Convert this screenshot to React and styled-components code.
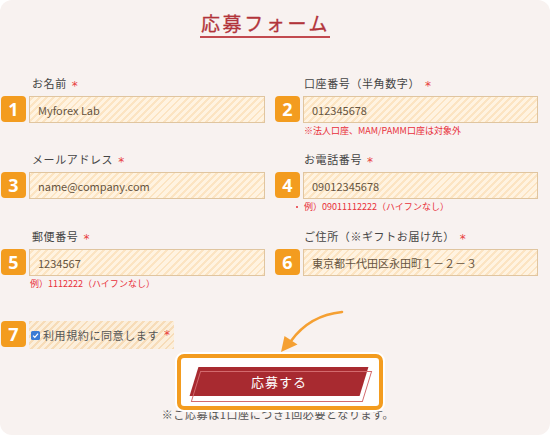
import React from "react";
import styled, { createGlobalStyle } from "styled-components";

const Global = createGlobalStyle`
  html, body { margin: 0; padding: 0; background: #ffffff; }
  body { font-family: "Noto Sans CJK JP", "Noto Sans", sans-serif; }
  * { box-sizing: border-box; }
`;

const Card = styled.div`
  position: relative;
  width: 550px;
  height: 435px;
  background: #f8f2f0;
  border-radius: 12px;
  overflow: hidden;
`;

const TitleWrap = styled.div`
  display: flex;
  justify-content: center;
  padding-top: 10px;
  padding-right: 20px;
`;

const Title = styled.h1`
  margin: 0;
  font-size: 19px;
  line-height: 26px;
  font-weight: 400;
  letter-spacing: 2.6px;
  color: #b2343a;
  border-bottom: 2px solid #c24a4f;
  padding-left: 1px;
  -webkit-text-stroke: 0.3px #b2343a;
`;

const Grid = styled.div`
  display: grid;
  grid-template-columns: 264px 263px;
  grid-template-rows: 76px 77px auto;
  column-gap: 10px;
  margin-top: 36px;
  padding-left: 1px;
`;

const Field = styled.div`
  display: flex;
  flex-direction: column;
`;

const Label = styled.div`
  font-size: 11px;
  line-height: 18px;
  letter-spacing: 0.6px;
  color: #444;
  margin-bottom: 4px;
  padding-left: ${(p) => p.$indent || 30}px;
`;

const Req = styled.span`
  display: inline-block;
  color: #e84040;
  font-family: "DejaVu Sans", sans-serif;
  font-size: 12px;
  line-height: 10px;
  margin-left: 5px;
  vertical-align: -2px;
`;

const Row = styled.div`
  display: flex;
  align-items: stretch;
  gap: 3px;
`;

const Badge = styled.div`
  width: 25px;
  height: 26px;
  flex: none;
  border-radius: 4px;
  background: #f39c1f;
  color: #fff;
  font-family: "Noto Sans", "Open Sans", sans-serif;
  font-weight: 700;
  font-size: 18px;
  line-height: 26px;
  text-align: center;
`;

const stripes = `repeating-linear-gradient(-45deg, #fce4c2 0 2px, #fff3e1 2px 5px)`;

const Input = styled.input`
  flex: 1;
  min-width: 0;
  height: 27px;
  border: 1px solid #e0c59f;
  background: ${stripes};
  padding: 0 8px;
  font-family: "Noto Sans CJK JP", "Noto Sans", sans-serif;
  font-size: 11px;
  color: #66543f;
  outline: none;
`;

const Note = styled.div`
  font-size: 9px;
  line-height: 14px;
  color: #e8303a;
  margin-top: 1px;
  padding-left: 29px;
  position: relative;
`;

const Dot = styled.span`
  position: absolute;
  left: 21px;
  top: 6px;
  width: 2px;
  height: 2px;
  border-radius: 1px;
  background: #e8303a;
`;

const AgreeRow = styled.div`
  display: flex;
  gap: 3px;
  margin-top: 30px;
  padding-left: 1px;
`;

const AgreeBox = styled.label`
  display: flex;
  align-items: center;
  width: 145px;
  height: 28px;
  padding-left: 2px;
  white-space: nowrap;
  background: repeating-linear-gradient(-45deg, #f7dcb8 0 2px, #fcefdc 2px 5px);
  font-size: 11px;
  letter-spacing: 0.6px;
  color: #555;
`;

const Check = styled.span`
  width: 9px;
  height: 9px;
  flex: none;
  border-radius: 1.5px;
  background: #3a7bd5;
  display: flex;
  align-items: center;
  justify-content: center;
  margin-right: 3px;
`;

const ButtonArea = styled.div`
  display: flex;
  flex-direction: column;
  align-items: center;
  margin-top: 5px;
  padding-left: 10px;
`;

const Frame = styled.div`
  position: relative;
  z-index: 1;
  width: 206px;
  height: 56px;
  border: 4px solid #f39c1f;
  border-radius: 7px;
  background: #ffffff;
  box-shadow: 0 0 0 2px #ffffff;
  display: flex;
  align-items: center;
  justify-content: center;
  padding-bottom: 2px;
`;

const SubmitButton = styled.button`
  position: relative;
  width: 170px;
  height: 29px;
  margin-right: 2px;
  border: none;
  padding: 0;
  background: #a82a30;
  transform: skewX(-17deg);
  color: #fff;
  font-family: "Noto Sans CJK JP", "Noto Sans", sans-serif;
  font-size: 13px;
  font-weight: 400;
  letter-spacing: 1px;
  cursor: pointer;

  &::before {
    content: "";
    position: absolute;
    left: 3px;
    top: 4px;
    width: 100%;
    height: 100%;
    border: 1px solid #d36a6e;
    z-index: -1;
  }
`;

const ButtonText = styled.span`
  display: inline-block;
  transform: skewX(17deg);
`;

const FootNote = styled.div`
  position: relative;
  z-index: 0;
  margin-top: -4px;
  margin-left: -4px;
  font-size: 11px;
  line-height: 16px;
  letter-spacing: 0.6px;
  color: #555;
`;

const Arrow = styled.svg`
  position: absolute;
  left: 270px;
  top: 305px;
  pointer-events: none;
`;

function FormField({ n, label, value, note, dot, labelIndent }) {
  return (
    <Field>
      <Label $indent={labelIndent}>
        {label}
        <Req>*</Req>
      </Label>
      <Row>
        <Badge>{n}</Badge>
        <Input value={value} readOnly />
      </Row>
      {note && (
        <Note>
          {dot && <Dot />}
          {note}
        </Note>
      )}
    </Field>
  );
}

export default function App() {
  return (
    <>
      <Global />
      <Card>
        <TitleWrap>
          <Title>応募フォーム</Title>
        </TitleWrap>
        <Grid>
          <FormField n="1" label="お名前" value="Myforex Lab" labelIndent={31} />
          <FormField
            n="2"
            label="口座番号（半角数字）"
            value="012345678"
            note="※法人口座、MAM/PAMM口座は対象外"
            labelIndent={29}
          />
          <FormField n="3" label="メールアドレス" value="name@company.com" labelIndent={31} />
          <FormField
            n="4"
            label="お電話番号"
            value="09012345678"
            note="例）09011112222（ハイフンなし）"
            dot
            labelIndent={29}
          />
          <FormField
            n="5"
            label="郵便番号"
            value="1234567"
            note="例）1112222（ハイフンなし）"
            labelIndent={31}
          />
          <FormField
            n="6"
            label="ご住所（※ギフトお届け先）"
            value="東京都千代田区永田町１－２－３"
            labelIndent={29}
          />
        </Grid>
        <AgreeRow>
          <Badge>7</Badge>
          <AgreeBox>
            <Check>
              <svg width="7" height="7" viewBox="0 0 10 10">
                <path d="M1.5 5.2 L4 7.6 L8.6 2.4" fill="none" stroke="#fff" strokeWidth="1.8" />
              </svg>
            </Check>
            利用規約に同意します
            <Req>*</Req>
          </AgreeBox>
        </AgreeRow>
        <ButtonArea>
          <Frame>
            <SubmitButton>
              <ButtonText>応募する</ButtonText>
            </SubmitButton>
          </Frame>
          <FootNote>※ご応募は1口座につき1回必要となります。</FootNote>
        </ButtonArea>
        <Arrow width="80" height="55" viewBox="0 0 80 55">
          <path d="M72 7 C 52 9, 34 18, 21 36" fill="none" stroke="#f5a032" strokeWidth="2.6" strokeLinecap="round" />
          <path d="M11 47 L14.5 31 L27.5 39.5 Z" fill="#f5a032" />
        </Arrow>
      </Card>
    </>
  );
}
